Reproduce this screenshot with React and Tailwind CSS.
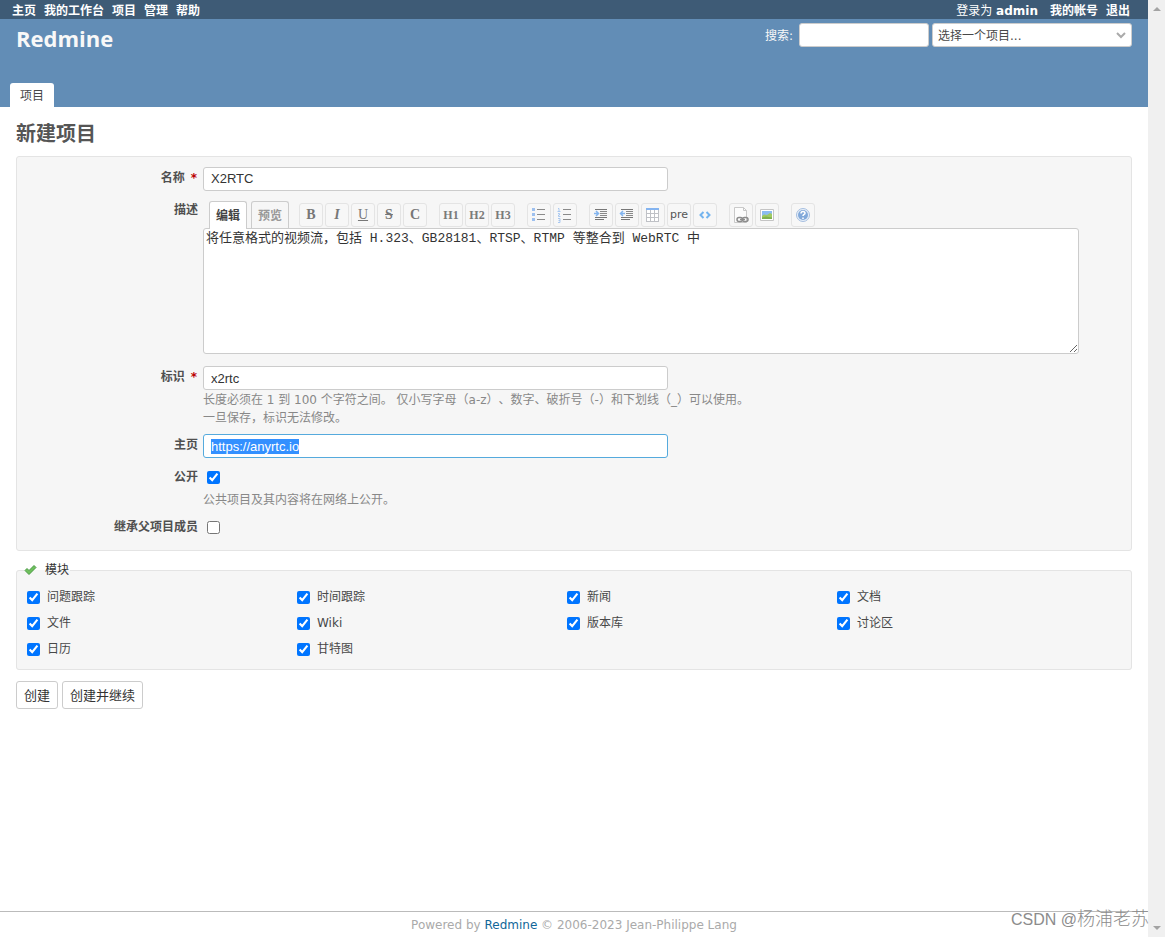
import { useEffect, useRef, useState } from 'react';

const MODULES = ['问题跟踪', '时间跟踪', '新闻', '文档', '文件', 'Wiki', '版本库', '讨论区', '日历', '甘特图'];

function ListIcon({ ordered }) {
  return (
    <svg width="16" height="16" viewBox="0 0 16 16">
      <path d="M6 2.5h8M6 7.5h8M6 12.5h8" stroke="#8a8a8a" />
      {ordered ? (
        <path d="M1 1.5h1v3M0.5 4.5h3M1 6.5h1.5v1.5h-1v1.5h2M1 11.5h2v4h-2M1.5 13.5h1.5" stroke="#a9c8f0" fill="none" />
      ) : (
        <path d="M1 1h3v3h-3zM1 6h3v3h-3zM1 11h3v3h-3z" fill="#9dc0ef" />
      )}
    </svg>
  );
}

function IndentIcon({ outdent }) {
  return (
    <svg width="16" height="16" viewBox="0 0 16 16" fill="none">
      <path d="M2 2.5h12M2 10.5h12M2 12.5h9" stroke="#777" />
      <path d="M7 4.5h7M7 6.5h7M7 8.5h7" stroke="#8a8a8a" />
      {outdent ? (
        <path d="M6 6.5H1.5M4 4L1.5 6.500 4 9" stroke="#82b4ee" strokeWidth="1.5" />
      ) : (
        <path d="M1 6.500h4.500M3 4l2.500 2.500L3 9" stroke="#82b4ee" strokeWidth="1.5" />
      )}
    </svg>
  );
}

function TableIcon() {
  return (
    <svg width="16" height="16" viewBox="0 0 16 16">
      <path d="M2 2h12v12h-12z" fill="#fff" />
      <path d="M1.5 3v11.500M5.500 3v11.500M9.500 3v11.500M13.500 3v11.500M1 6.500h13M1 10.500h13M1 14.500h13" stroke="#bfc1c6" />
      <path d="M1 1h13v2h-13z" fill="#84b4f0" />
    </svg>
  );
}

function CodeIcon() {
  return (
    <svg width="16" height="16" viewBox="0 0 16 16" fill="none" stroke="#74b4ee" strokeWidth="2">
      <path d="M6.500 5L3.500 8 6.500 11M9.500 5L12.500 8 9.500 11" />
    </svg>
  );
}

function LinkIcon() {
  return (
    <svg width="16" height="16" viewBox="0 0 16 16" fill="none">
      <path d="M1.500 0.500h9l3 3v12h-12z" fill="#fcfcfc" stroke="#c9c9c9" />
      <path d="M10.500 0.500v3h3" stroke="#c6c6c6" />
      <rect x="4" y="10.500" width="5.500" height="4" rx="2" stroke="#8c8c8c" strokeWidth="1.500" />
      <rect x="9.500" y="10.500" width="5.500" height="4" rx="2" stroke="#8c8c8c" strokeWidth="1.500" />
      <path d="M7 12.500h5" stroke="#8c8c8c" strokeWidth="1.500" />
    </svg>
  );
}

function ImageIcon() {
  return (
    <svg width="16" height="16" viewBox="0 0 16 16">
      <path d="M1.500 2.500h13v11h-13z" fill="#fff" stroke="#c4c4c4" />
      <path d="M3 4h10v8h-10z" fill="#8cbcf0" />
      <path d="M3 9l2-1.500 3 .5 3-2 2 1v5h-10z" fill="#9fca62" />
      <path d="M3 10.500l4-1 6 1v1.500h-10z" fill="#7fb04f" />
    </svg>
  );
}

function HelpIcon() {
  return (
    <svg width="16" height="16" viewBox="0 0 16 16" fill="none">
      <circle cx="8" cy="8" r="6.500" fill="#e9f0f9" stroke="#a6bfe0" />
      <circle cx="8" cy="8" r="5" fill="#82a9da" />
      <path d="M6 6.500c0-1.300.8-2 2-2s2 .7 2 1.800c0 1.200-2 1.200-2 2.700M8 10.500v1.500" stroke="#fff" strokeWidth="1.500" />
    </svg>
  );
}

function CheckIcon() {
  return (
    <svg width="13" height="12" viewBox="0 0 13 12">
      <path d="M1 6.500l2-2 2 2 5-5 2 2-7 7z" fill="#6ec05c" stroke="#4a9a44" strokeLinejoin="round" />
    </svg>
  );
}

const letter = 'font-["Liberation_Serif",serif] text-sm text-[#777]';
const heading = 'font-["Liberation_Serif",serif] text-xs font-bold text-[#7a7a7a]';

const TOOL_GROUPS = [
  [
    { title: '粗体', icon: <span className={`${letter} font-bold`}>B</span> },
    { title: '斜体', icon: <span className={`${letter} font-bold italic`}>I</span> },
    { title: '下划线', icon: <span className={`${letter} underline`}>U</span> },
    { title: '删除线', icon: <span className={`${letter} font-bold line-through`}>S</span> },
    { title: '代码', icon: <span className={`${letter} font-bold`}>C</span> },
  ],
  [
    { title: '标题 1', icon: <span className={heading}>H1</span> },
    { title: '标题 2', icon: <span className={heading}>H2</span> },
    { title: '标题 3', icon: <span className={heading}>H3</span> },
  ],
  [
    { title: '无序列表', icon: <ListIcon /> },
    { title: '有序列表', icon: <ListIcon ordered /> },
  ],
  [
    { title: '引用', icon: <IndentIcon /> },
    { title: '取消引用', icon: <IndentIcon outdent /> },
    { title: '表格', icon: <TableIcon /> },
    { title: '预格式', icon: <span className="text-[11px] text-[#555]">pre</span> },
    { title: '代码高亮', icon: <CodeIcon /> },
  ],
  [
    { title: 'Wiki 链接', icon: <LinkIcon /> },
    { title: '图片', icon: <ImageIcon /> },
  ],
  [{ title: '帮助', icon: <HelpIcon /> }],
];

function Toolbar() {
  return (
    <div className="flex h-[27px] items-end pl-1.5">
      <button type="button" className="z-10 -mb-px h-7 w-[38px] rounded-t-[3px] border border-b-0 border-[#ccc] bg-white font-bold text-[#444]">编辑</button>
      <button type="button" className="ml-1 h-[27px] w-[38px] rounded-t-[3px] border border-b-0 border-[#ccc] bg-[#f6f6f6] pt-0.5 font-bold text-[#999]">预览</button>
      <div className="mb-px ml-2.5 flex gap-3">
        {TOOL_GROUPS.map((group, i) => (
          <div key={i} className="flex gap-0.5">
            {group.map(({ title, icon }) => (
              <button key={title} type="button" aria-label={title} className="flex h-6 w-6 items-center justify-center rounded-[3px] border border-[#e4e4e4] bg-[#f7f7f7] leading-4">
                {icon}
              </button>
            ))}
          </div>
        ))}
      </div>
    </div>
  );
}

function Row({ id, label, required, labelClass = '', className = '', children }) {
  return (
    <div className={`flex gap-[5px] ${className}`}>
      <label htmlFor={id} className={`w-[175px] shrink-0 text-right font-bold leading-[18px] text-[#505050] ${labelClass}`}>
        {label}
        {required && <span className="ml-1.5 mr-px text-[#b00]">*</span>}
      </label>
      <div className="min-w-0 flex-1">{children}</div>
    </div>
  );
}

const inputClass = 'block h-6 w-[465px] max-w-full rounded-[3px] border border-[#ccc] bg-white px-[7px] font-["Liberation_Sans",sans-serif] text-[13px] text-[#333] outline-none focus:border-[#5ad]';

export default function App() {
  const homepageRef = useRef(null);
  const [form, setForm] = useState({
    name: 'X2RTC',
    description: '将任意格式的视频流，包括 H.323、GB28181、RTSP、RTMP 等整合到 WebRTC 中',
    identifier: 'x2rtc',
    homepage: 'https://anyrtc.io',
  });

  useEffect(() => {
    homepageRef.current.focus();
    homepageRef.current.select();
  }, []);

  const handleChange = (e) => {
    const { name, value } = e.target;
    setForm(prev => ({ ...prev, [name]: value }));
  };

  return (
    <div className='relative flex min-h-screen bg-white font-["DejaVu_Sans","Noto_Sans_CJK_SC",sans-serif] text-xs text-[#484848] [text-spacing-trim:space-all]'>
      <div className="flex min-w-0 flex-1 flex-col">
        <nav className="flex h-[19px] items-center justify-between bg-[#3e5b76] pl-3 pr-[18px] pt-0.5 text-white">
          <div className="flex gap-2 font-bold">
            <a href="#">主页</a>
            <a href="#">我的工作台</a>
            <a href="#">项目</a>
            <a href="#">管理</a>
            <a href="#">帮助</a>
          </div>
          <div className="flex">
            <span>登录为 <a href="#" className="font-bold">admin</a></span>
            <a href="#" className="ml-3 font-bold">我的帐号</a>
            <a href="#" className="ml-2 font-bold">退出</a>
          </div>
        </nav>

        <header className="flex h-[88px] flex-col justify-between bg-[#628db6]">
          <div className="flex items-start justify-between px-4 pt-1">
            <h1 className='font-["Open_Sans",sans-serif] text-[22px] font-bold leading-[30px] text-[#f8f8f8]'>Redmine</h1>
            <div className="flex items-center">
              <label htmlFor="q" className="mr-1.5 pt-0.5 text-[#f8f8f8]">搜索:</label>
              <input id="q" className="mr-[3px] h-6 w-[130px] rounded-[3px] border border-[#ccc] bg-white px-1.5 outline-none" />
              <div className="relative">
                <select aria-label="选择一个项目" className="block h-6 w-[200px] appearance-none rounded-[3px] border border-[#ccc] bg-white px-[5px] pt-0.5 outline-none">
                  <option>选择一个项目...</option>
                </select>
                <svg className="pointer-events-none absolute right-[6px] top-2" width="10" height="9" viewBox="0 0 10 9" fill="none" stroke="#aaa" strokeWidth="2">
                  <path d="M1 2l4 4 4-4" />
                </svg>
              </div>
            </div>
          </div>
          <div className="flex pl-2.5">
            <a href="#" className="h-6 rounded-t-[3px] bg-white px-2.5 leading-[26px]">项目</a>
          </div>
        </header>

        <main className="flex-1 px-4">
          <h2 className="pb-1.5 pt-[11px] text-xl font-bold leading-8 text-[#555]">新建项目</h2>
          <form>
            <div className="rounded-[3px] border border-[#e4e4e4] bg-[#f6f6f6] px-1.5 pb-[14px] pt-2.5">
              <Row id="name" label="名称" required labelClass="pt-0.5">
                <input id="name" name="name" value={form.name} onChange={handleChange} className={`${inputClass} pb-0.5`} />
              </Row>
              <Row id="description" label="描述" className="mt-2.5">
                <Toolbar />
                <textarea
                  id="description"
                  name="description"
                  value={form.description}
                  onChange={handleChange}
                  className='block h-[126px] w-[95%] rounded-[3px] border border-[#ccc] bg-white px-0.5 pt-px font-["Liberation_Mono","Noto_Sans_CJK_SC",monospace] text-[13px] leading-[18px] text-[#333] outline-none'
                />
              </Row>
              <Row id="identifier" label="标识" required labelClass="pt-0.5" className="mt-3">
                <input id="identifier" name="identifier" value={form.identifier} onChange={handleChange} className={inputClass} />
                <p className="mt-px leading-[18px] text-[#888]">
                  长度必须在 1 到 100 个字符之间。 仅小写字母（a-z）、数字、破折号（-）和下划线（_）可以使用。
                  <br />
                  一旦保存，标识无法修改。
                </p>
              </Row>
              <Row id="homepage" label="主页" labelClass="pt-0.5" className="mt-[7px]">
                <input
                  id="homepage"
                  name="homepage"
                  ref={homepageRef}
                  value={form.homepage}
                  onChange={handleChange}
                  className={`${inputClass} selection:bg-[#3390ff] selection:text-white`}
                />
              </Row>
              <Row id="is_public" label="公开" className="mt-2.5">
                <input id="is_public" type="checkbox" defaultChecked className="ml-1 mt-[3px] block h-[13px] w-[13px]" />
                <p className="mt-[7px] leading-[18px] text-[#888]">公共项目及其内容将在网络上公开。</p>
              </Row>
              <Row id="inherit_members" label="继承父项目成员" className="mt-[9px]">
                <input id="inherit_members" type="checkbox" className="ml-1 mt-[3px] block h-[13px] w-[13px]" />
              </Row>
            </div>

            <fieldset className="mt-2.5 rounded-[3px] border border-[#e4e4e4] bg-[#f6f6f6] px-[7px] pb-[7px]">
              <legend className="flex items-center gap-2 pr-px leading-[18px] text-[#333]">
                <CheckIcon />
                模块
              </legend>
              <div className="grid grid-cols-[repeat(auto-fill,270px)] pl-[3px] pt-[5px]">
                {MODULES.map(name => (
                  <label key={name} className="flex h-[26px] items-center gap-[7px]">
                    <input type="checkbox" defaultChecked className="h-[13px] w-[13px]" />
                    {name}
                  </label>
                ))}
              </div>
            </fieldset>

            <div className="mt-[11px] flex gap-1 text-[13px] text-[#333]">
              <button type="button" className="h-7 rounded-[3px] border border-[#ccc] bg-white px-[7px] pt-0.5">创建</button>
              <button type="button" className="h-7 rounded-[3px] border border-[#ccc] bg-white px-[7px] pt-0.5">创建并继续</button>
            </div>
          </form>
        </main>

        <footer className="h-[26px] border-t border-[#bbb] pt-px text-center leading-[25px] text-[#aaa]">
          Powered by <a href="#" className="text-[#116699]">Redmine</a> © 2006-2023 Jean-Philippe Lang
        </footer>
      </div>

      <div className="flex w-[17px] shrink-0 flex-col items-center justify-between bg-[#f0f0f0] py-[7px]">
        <svg width="8" height="4" viewBox="0 0 8 4" fill="#a3a3a3"><path d="M4 0l4 4H0z" /></svg>
        <svg width="8" height="4" viewBox="0 0 8 4" fill="#a3a3a3"><path d="M0 0h8L4 4z" /></svg>
      </div>

      <div className='absolute bottom-[5px] right-4 font-["Liberation_Sans","Noto_Sans_CJK_SC",sans-serif] text-lg font-light leading-6 text-[#8c8c8c]'>
        <span className="text-base">CSDN @</span>杨浦老苏
      </div>
    </div>
  );
}
